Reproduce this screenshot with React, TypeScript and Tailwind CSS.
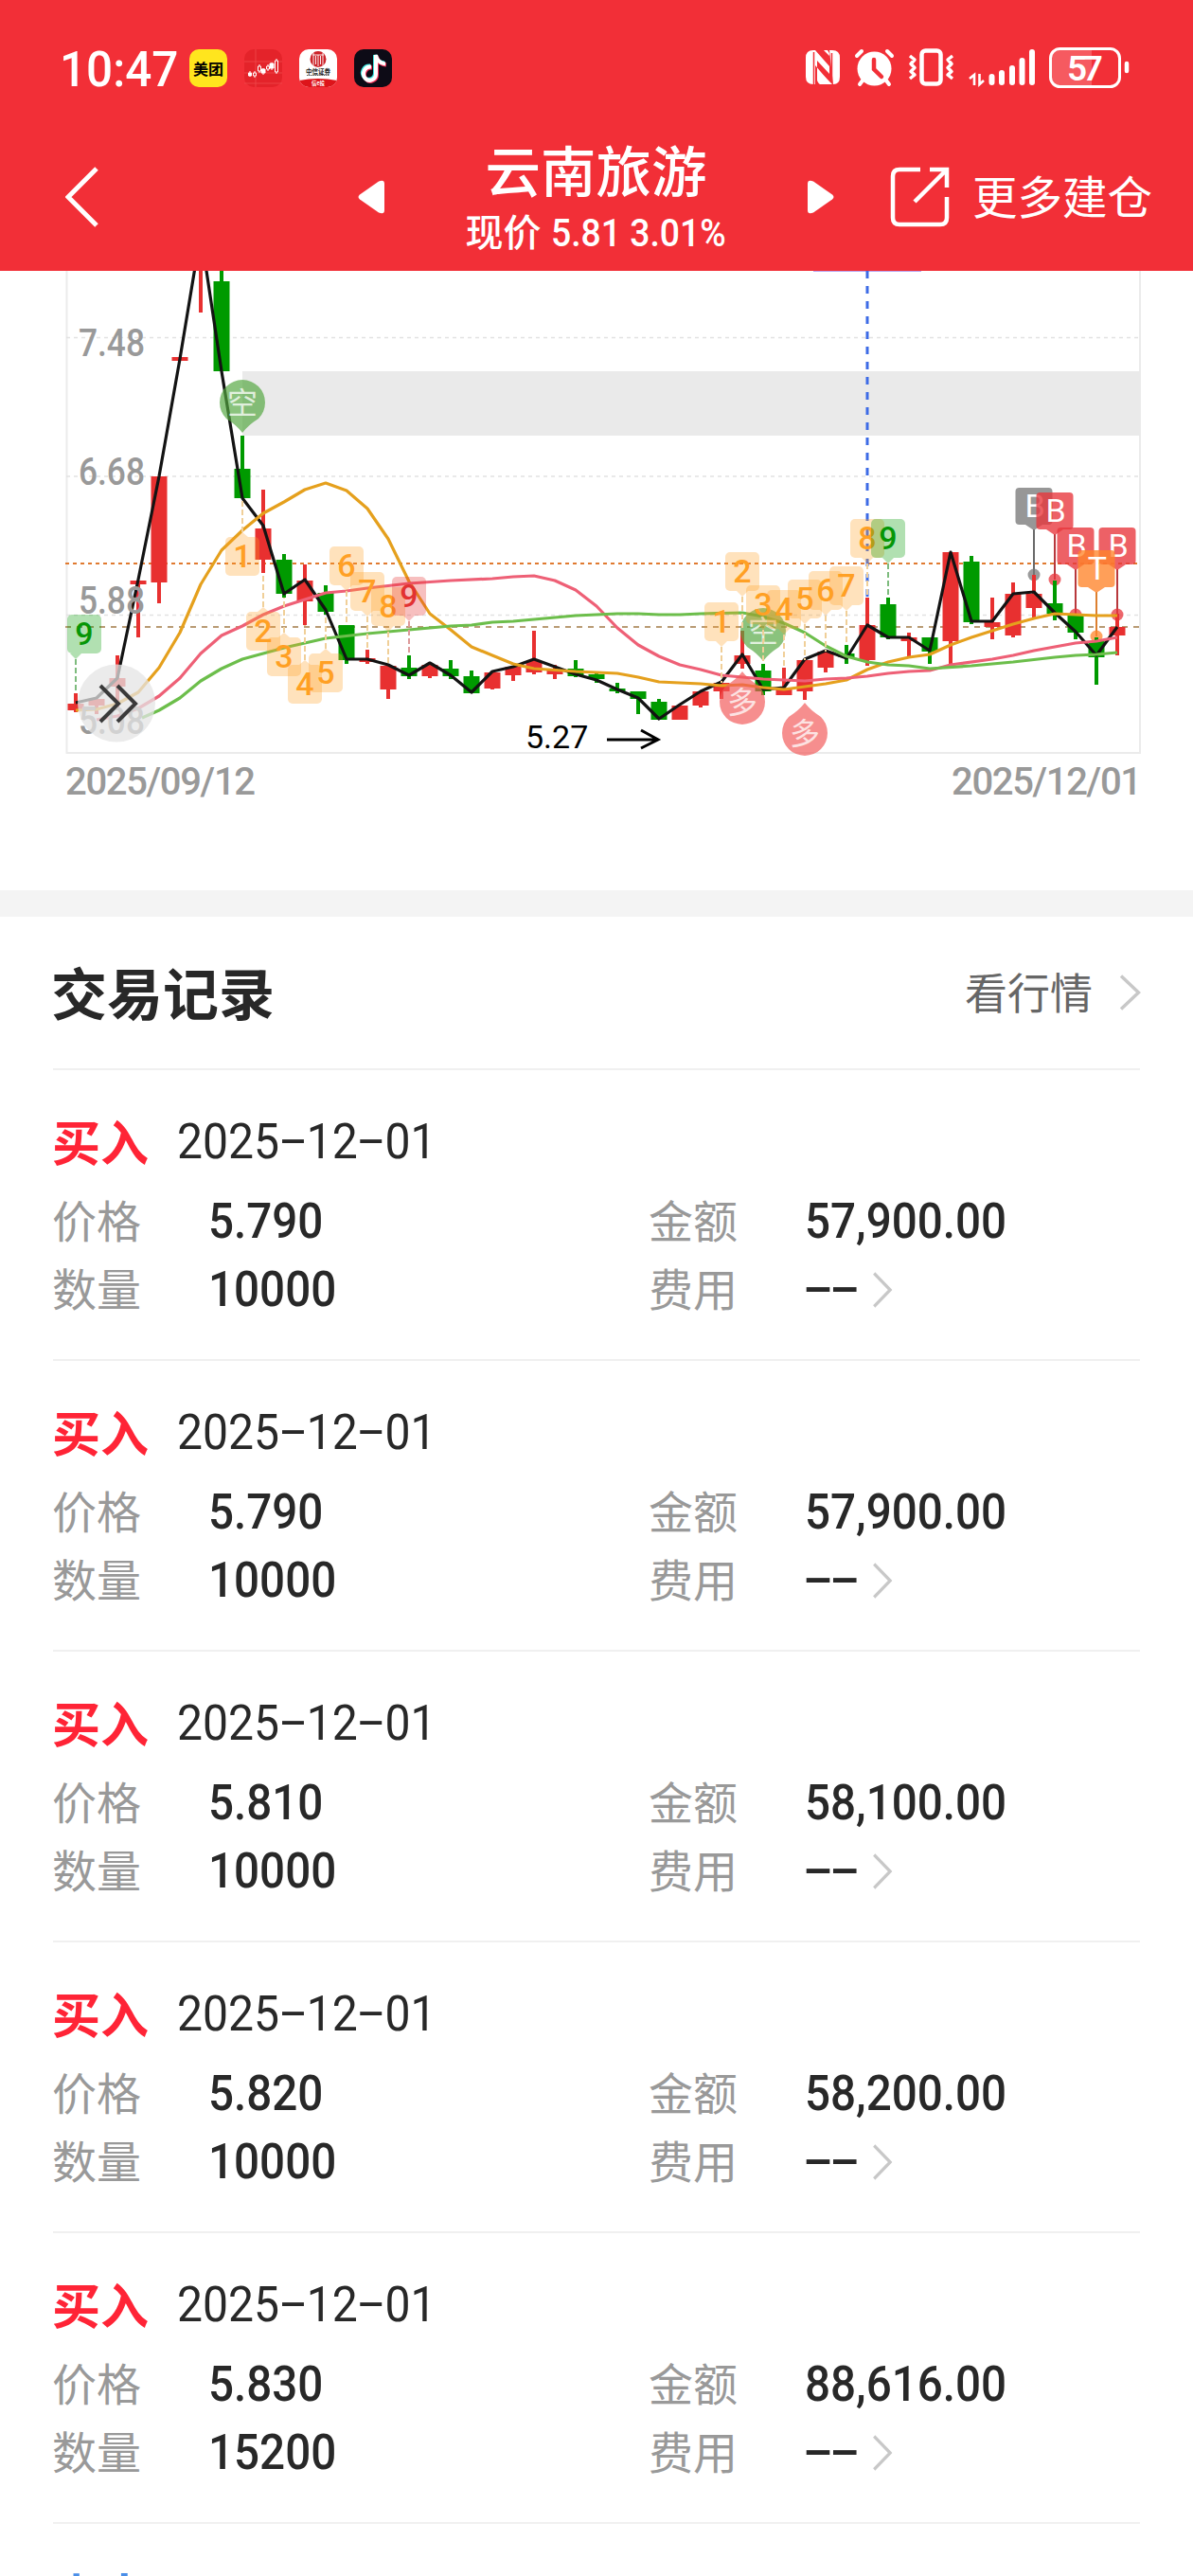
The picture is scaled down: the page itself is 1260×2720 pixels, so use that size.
import type { ReactNode } from "react";

const RED = "#e83030";
const GREEN = "#009a00";

const STEP = 22;
const x = (i: number) => 80 + i * STEP;

type Candle = [index: number, color: string, high: number, top: number, bottom: number, low: number];

const candles: Candle[] = [
  [0, RED, 732, 743, 750, 752],
  [1, RED, 738, 738, 745, 754],
  [2, RED, 692, 716, 725, 748],
  [3, RED, 613, 613, 617, 673],
  [4, RED, 503, 503, 615, 637],
  [5, RED, 377, 377, 381, 381],
  [6, RED, 280, 280, 281, 330],
  [7, GREEN, 280, 297, 392, 392],
  [8, GREEN, 460, 495, 526, 526],
  [9, RED, 517, 558, 591, 605],
  [10, GREEN, 585, 591, 627, 631],
  [11, RED, 596, 613, 635, 660],
  [12, GREEN, 618, 626, 646, 649],
  [13, GREEN, 660, 660, 697, 701],
  [14, RED, 686, 695, 699, 701],
  [15, RED, 702, 703, 728, 738],
  [16, GREEN, 692, 705, 714, 717],
  [17, RED, 700, 702, 714, 716],
  [18, GREEN, 697, 706, 714, 717],
  [19, GREEN, 708, 714, 732, 732],
  [20, RED, 710, 710, 727, 728],
  [21, RED, 704, 704, 713, 719],
  [22, RED, 666, 698, 710, 712],
  [23, RED, 702, 707, 712, 717],
  [24, GREEN, 697, 706, 714, 715],
  [25, GREEN, 710, 712, 717, 721],
  [26, GREEN, 721, 727, 730, 732],
  [27, GREEN, 730, 730, 738, 754],
  [28, GREEN, 738, 741, 760, 760],
  [29, RED, 745, 745, 760, 760],
  [30, RED, 730, 730, 745, 747],
  [31, RED, 721, 721, 730, 738],
  [32, RED, 666, 692, 701, 706],
  [33, GREEN, 701, 708, 730, 734],
  [34, RED, 705, 728, 734, 734],
  [35, RED, 697, 697, 730, 739],
  [36, RED, 688, 688, 705, 710],
  [37, GREEN, 681, 690, 694, 701],
  [38, RED, 631, 660, 697, 703],
  [39, GREEN, 631, 638, 673, 675],
  [40, RED, 668, 673, 677, 694],
  [41, GREEN, 673, 673, 688, 701],
  [42, RED, 583, 583, 677, 702],
  [43, GREEN, 587, 593, 657, 659],
  [44, RED, 631, 657, 662, 675],
  [45, RED, 615, 627, 671, 673],
  [46, RED, 607, 627, 642, 652],
  [47, GREEN, 613, 637, 648, 655],
  [48, GREEN, 650, 650, 668, 675],
  [49, GREEN, 673, 677, 694, 723],
  [50, RED, 648, 662, 671, 692],
];

const closes = [
  742, 737, 716, 612, 503, 379, 246, 392, 526, 555, 627, 612, 644, 696, 696, 702, 713, 700, 713, 731, 709, 704,
  696, 704, 712, 718, 728, 737, 759, 744, 730, 720, 691, 728, 726, 696, 687, 695, 660, 673, 673, 687, 583, 656,
  656, 627, 625, 647, 667, 692, 662,
];

const maOrange =
  "80,750 102,749 124,743 146,731 168,705 190,668 212,617 234,581 256,560 278,542 300,530 322,517 344,510 366,518 388,537 410,569 432,614 454,648 476,665 498,683 520,692 542,701 564,706 608,709 652,711 674,715 696,720 740,722 762,724 784,723 806,726 828,728 850,725 872,722 894,718 916,707 938,699 960,694 982,691 1004,681 1026,673 1048,666 1070,659 1092,653 1114,648 1136,649 1158,650 1180,650";
const maPink =
  "102,760 124,756 146,748 168,735 190,716 212,690 234,671 256,661 278,649 300,640 322,633 344,626 366,624 388,621 432,616 476,613 520,611 542,609 564,608 586,613 608,623 630,640 652,663 674,681 696,693 718,702 740,707 762,713 784,715 806,717 828,718 850,719 872,717 894,716 916,714 938,711 960,709 982,708 1004,702 1048,696 1070,692 1092,687 1114,683 1136,679 1158,677 1180,673";
const maGreen =
  "150,758 168,750 190,737 212,719 234,706 256,696 278,690 300,684 322,679 344,674 388,669 432,665 454,663 476,661 498,660 520,657 542,656 564,654 586,652 608,650 652,648 674,648 696,649 718,649 740,648 784,647 806,651 828,658 850,668 872,682 894,693 916,699 938,702 960,703 982,706 1026,703 1070,699 1114,694 1136,692 1158,691 1180,689";

const tones = {
  orange: { box: "#ffa126", text: "#ffa024", line: "#f0cf98" },
  green: { box: "#009a00", text: "#069606", line: "#7dbb7d" },
  red: { box: "#e83030", text: "#e23232", line: "#dd9a9a" },
};

type Mark = { n: number; i: number; y: number; to: number; tone?: keyof typeof tones; up?: boolean; dx?: number };

// y is the top of the badge, `to` is where its dashed leader meets the candle
const marks: Mark[] = [
  { n: 9, i: 0, y: 649, to: 732, tone: "green", dx: 9 },
  { n: 1, i: 8, y: 567, to: 526, up: true },
  { n: 2, i: 9, y: 646, to: 605, up: true },
  { n: 3, i: 10, y: 673, to: 631, up: true },
  { n: 4, i: 11, y: 702, to: 660, up: true },
  { n: 5, i: 12, y: 690, to: 649, up: true },
  { n: 6, i: 13, y: 577, to: 660 },
  { n: 7, i: 14, y: 604, to: 686 },
  { n: 8, i: 15, y: 620, to: 702 },
  { n: 9, i: 16, y: 609, to: 692, tone: "red" },
  { n: 1, i: 31, y: 636, to: 721 },
  { n: 2, i: 32, y: 583, to: 666 },
  { n: 3, i: 33, y: 618, to: 701 },
  { n: 4, i: 34, y: 623, to: 705 },
  { n: 5, i: 35, y: 612, to: 697 },
  { n: 6, i: 36, y: 603, to: 688 },
  { n: 7, i: 37, y: 598, to: 681 },
  { n: 8, i: 38, y: 548, to: 631 },
  { n: 9, i: 39, y: 548, to: 631, tone: "green" },
];

function CountMark({ n, i, y, to, tone = "orange", up, dx = 0 }: Mark) {
  const c = tones[tone];
  const cx = x(i);
  const tip = up ? y - 5 : y + 47;
  const base = up ? y : y + 41;
  return (
    <g>
      <line x1={cx} x2={cx} y1={tip} y2={to} stroke={c.line} strokeWidth="2" strokeDasharray="6 3" />
      <g fill={c.box} opacity="0.3">
        <rect x={cx - 18 + dx} y={y} width="36" height="41" rx="5" />
        <path d={`M${cx - 6} ${base}L${cx} ${tip}L${cx + 6} ${base}Z`} />
      </g>
      <text x={cx + dx} y={y + 32} textAnchor="middle" fontSize="34" fontWeight="500" fill={c.text}>
        {n}
      </text>
    </g>
  );
}

function Balloon({ cx, cy, up, color, label }: { cx: number; cy: number; up?: boolean; color: string; label: string }) {
  const s = up ? -1 : 1;
  return (
    <g>
      <path
        d={`M${cx - 17} ${cy + 17 * s}A24 24 0 1 ${up ? 0 : 1} ${cx + 17} ${cy + 17 * s}Q${cx + 6} ${cy + 24 * s} ${cx} ${cy + 32 * s}Q${cx - 6} ${cy + 24 * s} ${cx - 17} ${cy + 17 * s}Z`}
        fill={color}
        opacity="0.68"
      />
      <text
        x={cx}
        y={cy + 12}
        textAnchor="middle"
        fontSize="32"
        fill="#fff"
        fillOpacity="0.75"
        className="font-['Noto_Sans_CJK_SC',sans-serif]"
      >
        {label}
      </text>
    </g>
  );
}

const trades = [
  { i: 46, y: 515, dot: 607, label: "B", fill: "#7a7a7a", line: "#6a6a6a" },
  { i: 47, y: 520, dot: 612, label: "B", fill: "#e8363c", line: "#b8383c" },
  { i: 48, y: 557, dot: 649, label: "B", fill: "#e8363c", line: "#b8383c" },
  { i: 50, y: 557, dot: 649, label: "B", fill: "#e8363c", line: "#b8383c" },
  { i: 49, y: 581, dot: 672, label: "T", fill: "#ff852b", line: "#dd8030" },
];

function KLineChart() {
  return (
    <svg viewBox="0 286 1260 654" className="block h-[654px] w-full font-[Roboto,sans-serif]">
      <path d="M70.500 286V795H1204V286" fill="none" stroke="#ebebeb" strokeWidth="2" />
      <line x1="859" x2="973" y1="286.500" y2="286.500" stroke="#b9a4f0" />
      {[356.5, 503, 649.5].map((y) => (
        <line key={y} x1="70" x2="1204" y1={y} y2={y} stroke="#e2e2e2" strokeWidth="1.500" strokeDasharray="4 4" />
      ))}
      <rect x="256" y="392" width="948" height="68" fill="#eaeaea" />
      <line x1="69" x2="1202" y1="595" y2="595" stroke="#e07a30" strokeWidth="2" strokeDasharray="4 4" />
      <line x1="69" x2="1204" y1="662" y2="662" stroke="#b99b74" strokeWidth="2" strokeDasharray="6 6" />

      <line x1="916" x2="916" y1="286" y2="631" stroke="#3d6be6" strokeWidth="3" strokeDasharray="8 8" />

      {trades.map((t) => (
        <g key={t.i}>
          <line x1={x(t.i)} x2={x(t.i)} y1={t.y + 44} y2={t.dot} stroke={t.line} strokeWidth="2" />
          <circle cx={x(t.i)} cy={t.dot} r="6.500" fill={t.fill} opacity="0.75" />
        </g>
      ))}

      {candles.map(([i, color, high, top, bottom, low]) => (
        <g key={i} fill={color}>
          <rect x={x(i) - 2} y={high} width="4" height={low - high} />
          <rect x={x(i) - 8.5} y={top} width="17" height={bottom - top} />
        </g>
      ))}

      <g fill="none" strokeWidth="3.200" strokeLinejoin="round">
        <polyline points={closes.map((y, i) => `${x(i)},${y}`).join(" ")} stroke="#131313" />
        <polyline points={maOrange} stroke="#e5a01d" />
        <polyline points={maPink} stroke="#ee6076" />
        <polyline points={maGreen} stroke="#6cbe4b" />
      </g>

      <g fontSize="40" fontWeight="500" fill="#999">
        <text x="83" y="376" textLength="70" lengthAdjust="spacingAndGlyphs">7.48</text>
        <text x="83" y="512" textLength="70" lengthAdjust="spacingAndGlyphs">6.68</text>
        <text x="83" y="648" textLength="70" lengthAdjust="spacingAndGlyphs">5.88</text>
        <text x="83" y="775" textLength="70" lengthAdjust="spacingAndGlyphs">5.08</text>
      </g>

      <Balloon cx={256} cy={425} color="#53a63f" label="空" />
      <Balloon cx={806} cy={666} color="#53a63f" label="空" />
      <Balloon cx={784} cy={741} up color="#f25858" label="多" />
      <Balloon cx={850} cy={774} up color="#f25858" label="多" />

      {marks.map((m) => (
        <CountMark key={`${m.i}-${m.n}`} {...m} />
      ))}

      {trades.map((t) => (
        <g key={t.i}>
          <g fill={t.fill} opacity="0.78">
            <rect x={x(t.i) - 19.5} y={t.y} width="39" height="39" rx="4" />
            <path d={`M${x(t.i) - 9} ${t.y + 39}h18l-9 6z`} />
          </g>
          <text x={x(t.i) + 1} y={t.y + 31} textAnchor="middle" fontSize="34" fill="#fff">
            {t.label}
          </text>
        </g>
      ))}

      <text x="555" y="790" fontSize="34" fill="#000">
        5.27
      </text>
      <path d="M641 781H694M677 771L695 781L677 790" fill="none" stroke="#000" strokeWidth="3" />

      <circle cx="123" cy="742.500" r="41" fill="#e4e4e4" fillOpacity="0.75" />
      <path d="M106 724L125 743L106 762M124 724L143 743L124 762" fill="none" stroke="#3a3a3a" strokeWidth="4" />

      <g fontSize="40" fontWeight="500" fill="#999">
        <text x="69" y="839" textLength="201">2025/09/12</text>
        <text x="1005" y="839" textLength="201">2025/12/01</text>
      </g>
    </svg>
  );
}

function StatusBar() {
  return (
    <div className="flex h-[144px] items-center justify-between pl-[63px] pr-[66px]">
      <div className="flex items-center">
        <span className="w-[137px] origin-left translate-y-0.5 scale-x-[0.95] whitespace-nowrap font-[Roboto,sans-serif] text-[52px] font-medium leading-none">
          10:47
        </span>
        <div className="flex gap-[18px]">
          <span className="flex size-10 items-center justify-center rounded-[10px] bg-[#ffe51e] text-[16px] font-bold leading-none text-black">
            美团
          </span>
          <svg viewBox="0 0 40 40" className="size-10">
            <rect width="40" height="40" rx="10" fill="#e4232a" />
            <path d="M12 0V40M0 13H40M0 25H40M0 36H40" stroke="#ef4a4c" strokeWidth="0.800" />
            <g stroke="#fff" strokeWidth="1">
              <path d="M6 23v6M11 23v7M16 16v9M20 20v7M25 16v7M29 14v8M34 10v16" />
              <path d="M4.500 25h3v3h-3zM18 21h4v4h-4zM27 15h4v5h-4z" fill="#fff" />
              <path d="M9.500 25h3v3h-3zM14.500 18h3v5h-3zM23.500 18h3v3h-3zM32.500 12h3v12h-3z" fill="#e4232a" />
            </g>
          </svg>
          <svg viewBox="0 0 40 40" className="size-10">
            <clipPath id="citic">
              <rect width="40" height="40" rx="10" />
            </clipPath>
            <g clipPath="url(#citic)">
              <rect width="40" height="40" fill="#fff" />
              <circle cx="20" cy="10.500" r="8.500" fill="#cc2229" />
              <path d="M15 4v13M17.500 7v9M22.500 7v9M25 4v13M20 6v12M14 6h12" stroke="#fff" strokeWidth="0.900" />
              <text x="20" y="25.500" textAnchor="middle" fontSize="6.500" fontWeight="700" fill="#222">
                中信证券
              </text>
              <path d="M8 27.500H32" stroke="#555" strokeWidth="1" strokeDasharray="1.500 0.700" />
              <path d="M0 33Q20 29 40 33V40H0Z" fill="#dd141a" />
              <text x="20" y="37.500" textAnchor="middle" fontSize="5.500" fontWeight="700" fill="#fff">
                信e投
              </text>
            </g>
          </svg>
          <svg viewBox="0 0 40 40" className="size-10" fill="none" strokeWidth="4">
            <rect width="40" height="40" rx="10" fill="#0d0b16" />
            <path d="M17 17.500C10 17 6.500 25 11 30C15 34 22 31 22 25V6C23 11 27 14 32 14.500" stroke="#3fe6e0" />
            <path d="M19 19.500C12 19 8.500 27 13 32C17 36 24 33 24 27V8C25 13 29 16 34 16.500" stroke="#f2355b" />
            <path d="M18 18.500C11 18 7.500 26 12 31C16 35 23 32 23 26V6C24 12 28 15 33 15.500" stroke="#fff" />
          </svg>
        </div>
      </div>

      <svg viewBox="850 50 344 46" className="h-[46px] w-[344px]" fill="none" stroke="#fff">
        <path d="M859 54H861V90H859Q851 90 851 82V62Q851 54 859 54Z" fill="#fff" stroke="none" />
        <path d="M861 54L876 71V60Q876 56 874 54H870ZM861 54H870L876 60V79L863 65V84Q863 88 866 90H878L861 70Z" fill="#fff" stroke="none" />
        <path d="M863 74L879 90H868Q863 88 863 84Z" fill="#fff" stroke="none" />
        <path d="M876 54H879Q887 54 887 62V82Q887 90 880 90Z" fill="#fff" stroke="none" />
        <path d="M878.500 57V88" stroke="#f22f37" strokeWidth="1.500" />
        <path d="M859.500 56V90" stroke="#f22f37" strokeWidth="1.500" />

        <circle cx="923.500" cy="73.500" r="18" fill="#fff" stroke="none" />
        <path d="M923 64V74L931 82" stroke="#f22f37" strokeWidth="4.500" strokeLinecap="round" />
        <path d="M905 60L910 55M942 60L937 55M911 86L908 90M936 86L939 90" strokeWidth="4" strokeLinecap="round" />

        <rect x="973.500" y="54.500" width="20" height="35" rx="4" strokeWidth="4.500" />
        <path
          d="M961 60L966 64L962 68.500L966 72.500L962 76.500L966 80L961 84M1006 60L1001 64L1005 68.500L1001 72.500L1005 76.500L1001 80L1006 84"
          strokeWidth="3.500"
          strokeLinejoin="round"
        />

        <path d="M1029 91V80L1024 84M1034.500 79V90L1039 86" strokeWidth="2.600" />
        <path d="M1047.500 82V88M1058 78V88M1069 73V88M1079.500 65V88M1090 56V88" strokeWidth="6" strokeLinecap="round" />

        <path d="M1120 53H1153V91H1120Q1110 91 1110 81V63Q1110 53 1120 53Z" fill="#f65a60" stroke="none" />
        <rect x="1109.500" y="52.500" width="73" height="40" rx="10" strokeWidth="3" />
        <path d="M1190 68V76" strokeWidth="4.500" strokeLinecap="round" />
        <text
          x="1146"
          y="86"
          textAnchor="middle"
          fontSize="37"
          fontWeight="600"
          fill="#fff"
          stroke="none"
          textLength="38"
          className="font-[Roboto,sans-serif]"
        >
          57
        </text>
      </svg>
    </div>
  );
}

function Header() {
  return (
    <header className="h-[286px] bg-[#f22f37] text-white">
      <StatusBar />
      <div className="flex h-[128px] items-center">
        <svg viewBox="0 0 36 64" className="ml-[69px] h-16 w-9" fill="none" stroke="currentColor" strokeWidth="5">
          <path d="M33 2L3 32L33 62" />
        </svg>
        <svg viewBox="0 0 28 36" className="ml-[273px] h-9 w-7" fill="currentColor">
          <path d="M2 15.500L22 1.500Q28 -1 28 4V32Q28 37 22 34.500L2 20.500Q-1 18 2 15.500Z" />
        </svg>
        <div className="mx-[37px] -mt-1 flex w-[373px] flex-col items-center">
          <h1 className="text-[58.500px] font-medium leading-[70px]">云南旅游</h1>
          <p className="-ml-1 mt-1.5 flex items-baseline text-[40px] font-medium leading-[48px]">
            现价
            <span className="ml-2.5 w-[182px] origin-left scale-x-[0.91] whitespace-nowrap font-[Roboto,sans-serif] text-[41px]">
              5.81 3.01%
            </span>
          </p>
        </div>
        <svg viewBox="0 0 28 36" className="h-9 w-7" fill="currentColor">
          <path d="M26 15.500L6 1.500Q0 -1 0 4V32Q0 37 6 34.500L26 20.500Q29 18 26 15.500Z" />
        </svg>
        <svg viewBox="0 0 64 64" className="ml-[59px] size-16" fill="none" stroke="currentColor" strokeWidth="4.500">
          <path d="M32 3H10Q3 3 3 10V54Q3 61 10 61H53Q60 61 60 54V32" />
          <path d="M42 3H60V22M59 4L26 37" />
        </svg>
        <span className="-mt-1 ml-[23px] whitespace-nowrap text-[47.500px] leading-none">更多建仓</span>
      </div>
    </header>
  );
}

function Chevron() {
  return (
    <svg viewBox="0 0 23 38" className="h-[38px] w-[23px]" fill="none" stroke="#c8c8c8" strokeWidth="3.500">
      <path d="M2 1.500L20.500 19L2 36.500" />
    </svg>
  );
}

const records = [
  { price: "5.790", qty: "10000", amount: "57,900.00" },
  { price: "5.790", qty: "10000", amount: "57,900.00" },
  { price: "5.810", qty: "10000", amount: "58,100.00" },
  { price: "5.820", qty: "10000", amount: "58,200.00" },
  { price: "5.830", qty: "15200", amount: "88,616.00" },
];

function Dash() {
  return <span className="inline-block w-[31px] -translate-y-0.5 scale-x-[2] text-center">-</span>;
}

function RecordHead({ side, color }: { side: string; color: string }) {
  return (
    <div className="flex h-[76px] items-center">
      <span className={`-ml-px -mt-1 text-[51px] font-bold leading-none ${color}`}>{side}</span>
      <span className="-mt-px ml-[30px] origin-left scale-x-[0.925] whitespace-nowrap font-[Roboto,sans-serif] text-[52px] leading-none text-[#282828]">
        2025
        <Dash />
        12
        <Dash />
        01
      </span>
    </div>
  );
}

function Field({ label, children }: { label: string; children: ReactNode }) {
  return (
    <div className="flex h-[72px] w-[630px] items-center">
      <span className="-ml-px -mt-1 w-[165px] text-[47px] leading-none text-[#999]">{label}</span>
      <span className="mt-[3px] flex origin-left scale-x-[0.915] items-center whitespace-nowrap font-[Roboto,sans-serif] text-[52px] font-medium leading-none text-[#282828]">
        {children}
      </span>
    </div>
  );
}

export default function App() {
  return (
    <div className="h-[2720px] w-[1260px] overflow-hidden bg-white font-['Noto_Sans_CJK_SC',sans-serif]">
      <Header />
      <KLineChart />
      <div className="h-7 bg-[#f4f4f4]" />
      <section className="px-14">
        <div className="flex h-[162px] items-center justify-between border-b-2 border-[#f0f0f0]">
          <h2 className="-ml-0.5 -mt-1 text-[59px] font-bold leading-none text-[#282828]">交易记录</h2>
          <div className="-mr-px flex items-center gap-[28px]">
            <span className="-mt-1 text-[45px] leading-none text-[#666]">看行情</span>
            <Chevron />
          </div>
        </div>

        {records.map((r, i) => (
          <div key={i} className="h-[307px] border-b-2 border-[#f0f0f0] pt-[38px]">
            <RecordHead side="买入" color="text-[#ff2436]" />
            <div className="-mr-28 mt-[8px] flex flex-wrap">
              <Field label="价格">{r.price}</Field>
              <Field label="金额">{r.amount}</Field>
              <Field label="数量">{r.qty}</Field>
              <Field label="费用">
                <Dash />
                <Dash />
                <span className="ml-[16px]">
                  <Chevron />
                </span>
              </Field>
            </div>
          </div>
        ))}

        <div className="pt-[38px]">
          <RecordHead side="卖出" color="text-[#4a8fe8]" />
        </div>
      </section>
    </div>
  );
}
